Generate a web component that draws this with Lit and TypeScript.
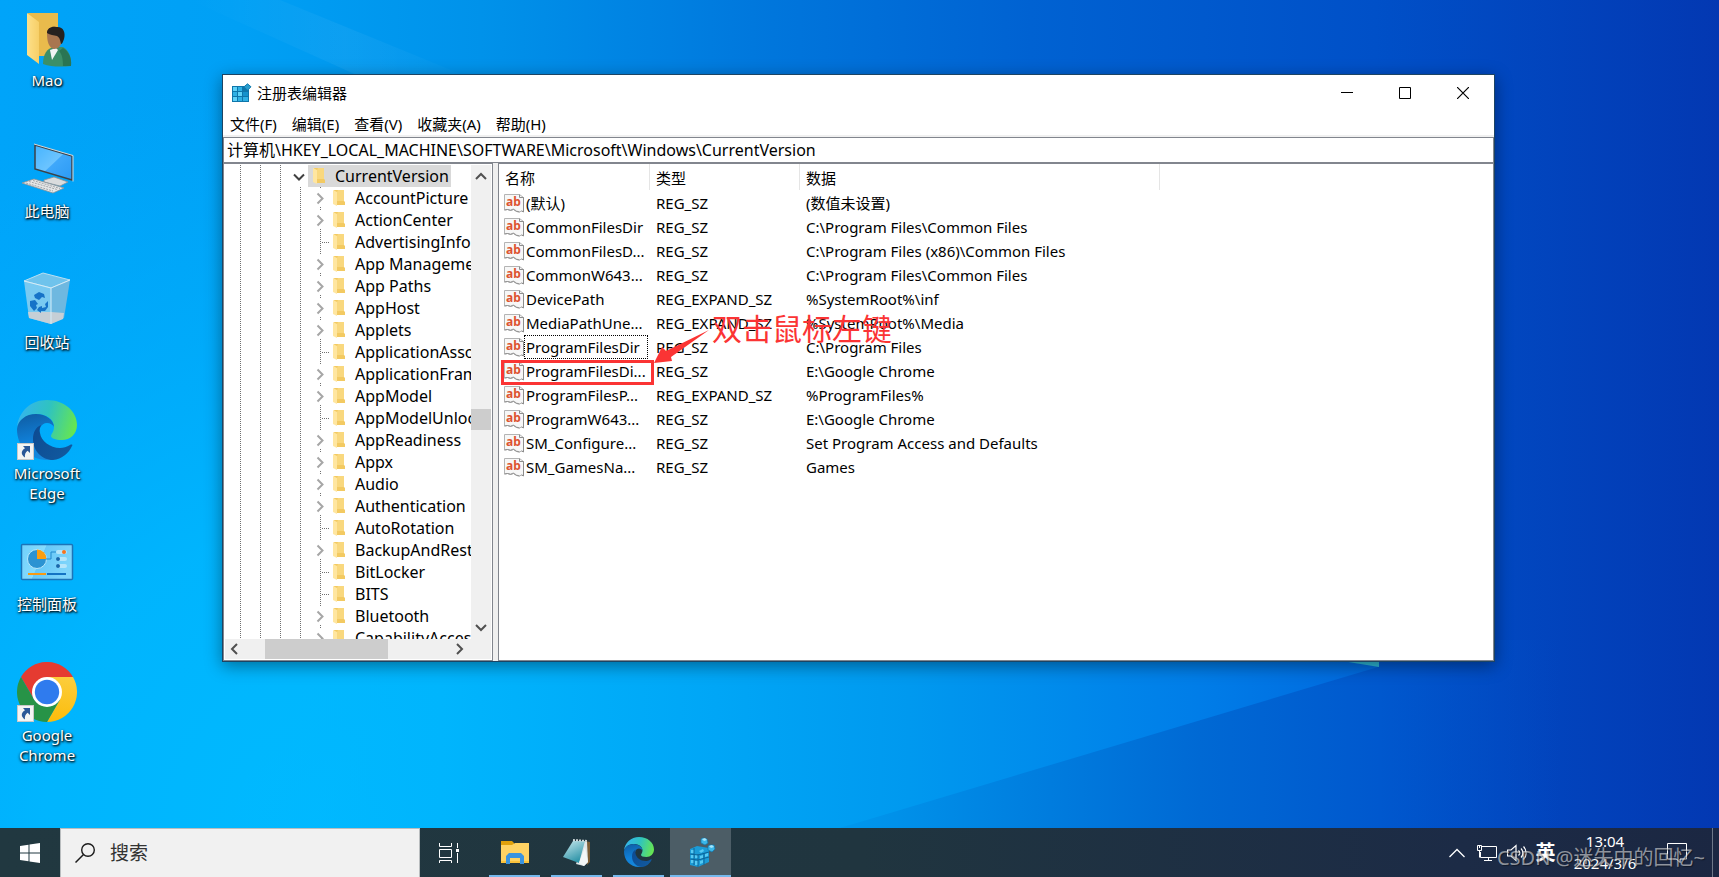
import { LitElement, html, css, svg } from "lit";
import { customElement } from "lit/decorators.js";
import { classMap } from "lit/directives/class-map.js";

const edgeArt = (id: string) => svg`
  <defs>
    <linearGradient id="${id}a" x1="0" y1="0.3" x2="1" y2="0.5">
      <stop offset="0" stop-color="#35b4f0"/><stop offset="0.5" stop-color="#2fc3c0"/><stop offset="1" stop-color="#66e552"/>
    </linearGradient>
    <linearGradient id="${id}b" x1="0.2" y1="0" x2="0.4" y2="1">
      <stop offset="0" stop-color="#0f5da4"/><stop offset="0.6" stop-color="#1080d8"/><stop offset="1" stop-color="#1688dc"/>
    </linearGradient>
    <linearGradient id="${id}c" x1="0" y1="0" x2="1" y2="0.6">
      <stop offset="0" stop-color="#0d4a92"/><stop offset="1" stop-color="#11599e"/>
    </linearGradient>
  </defs>
  <path fill="url(#${id}a)" d="M0 27C2 11 14 0 30 0c17 0 30 11 30 25 0 9-7 15-15 15-7 0-11-2-11-4s3-4 3-9C37 19 29 14 20 14 10 14 3 19 0 27z"/>
  <path fill="url(#${id}b)" d="M0 29c1-9 9-15 19-15 10 0 18 6 18 13-1-2-4-4-7-4-6 0-9 7-8 14 2 12 9 20 16 22-3 1-5 1-8 1C12 60 0 46 0 29z"/>
  <path fill="url(#${id}c)" d="M24 25c-5 2-8 7-8 14 0 12 9 21 20 21 9-1 16-7 19-14 1-1 0-2-2-1-3 2-7 3-10 3-10 0-19-7-20-15-1-3 0-6 1-8z"/>`;

const shortcutBadge = svg`
  <rect x="0.5" y="43.5" width="16" height="16" fill="#f4f4f4" stroke="#c9c9c9"/>
  <path fill="#2b5797" d="M6 46h7v7l-2.400-2.200C8.500 52.500 7.500 54.500 8 57.500 4 55 3.500 51 8 48.300z"/>`;

const desktopArt: Record<string, unknown> = {
  user: svg`
    <defs><linearGradient id="uf" x1="0" x2="1"><stop offset="0" stop-color="#fde08a"/><stop offset="1" stop-color="#f7cf67"/></linearGradient></defs>
    <path fill="#e9bb4c" d="M11 6h30v43H18z"/>
    <path fill="url(#uf)" d="M10 6l12 9v42l-12-9z"/>
    <path fill="#3c8f68" d="M26 57c0-10 4-15 10-17h10c5 3 9 9 8 19-10 1-20 1-28-2z"/>
    <path fill="#2a7553" d="M42 44c3 3 4 8 4 15h8c1-9-3-15-8-18z"/>
    <path fill="#f2f4f4" d="M33 43l6-2 2 2-6 10z"/>
    <path fill="#a9764f" d="M30 26c0-5 5-7 10-6 6 1 7 8 5 14-1 5-4 8-8 8-5-1-7-7-7-16z"/>
    <path fill="#26211f" d="M30 26c0-5 5-7 9-6 7-1 10 5 8 12-1 3-2 5-3 5-1-4-1-6-4-8-3-1-7-1-10-3z"/>`,
  computer: svg`
    <defs><linearGradient id="pc" x1="0" y1="0" x2="1" y2="1"><stop offset="0" stop-color="#45b4ff"/><stop offset="0.500" stop-color="#6cc4ff"/><stop offset="0.520" stop-color="#3fa8fb"/><stop offset="1" stop-color="#2b9af5"/></linearGradient></defs>
    <path fill="#d9dcde" stroke="#8b9196" stroke-width="0.800" d="M27 42l10-3 14 5-8 4-16-4z"/>
    <path fill="url(#pc)" stroke="#3c4248" stroke-width="1.500" d="M18 7l37 11v24L18 31z"/>
    <path fill="none" stroke="#d5dade" d="M17 6l39 11.500v26"/>
    <path fill="#e6e7e8" stroke="#8f9498" stroke-width="0.800" d="M5 45l12-4 30 9-11 5z"/>
    <path fill="none" stroke="#a2a7ab" stroke-dasharray="2 1" d="M9 45l27 8M12 43.500l28 8M16 42.500l27 8"/>`,
  bin: svg`
    <path fill="#6fc3ec" stroke="#b9dff1" d="M7 12L26 4l27 7-19 8z"/>
    <path fill="#86cdef" fill-opacity="0.900" d="M7 12l27 7v36l-22-6z"/>
    <path fill="#74b8de" fill-opacity="0.950" d="M34 19l19-8-6 38-13 6z"/>
    <path fill="#c6cfd6" d="M11 43l23 0 13 1-1 6-12 5-22-6z"/>
    <path fill="none" stroke="#d5ecf7" d="M7 12l27 7 19-8M34 19v36"/>
    <path fill="#1673c8" d="M17 26l5-3 5 2 1 4-3-1-3 3-4-2zM13 32l5-1 3 4-2 1 1 3-3 3-4-5zM22 38l3-1v2l4-1-1-3 3-3 0 6-3 4-4 0v2l-4-3z"/>`,
  edge: svg`${edgeArt("de")}${shortcutBadge}`,
  panel: svg`
    <defs><linearGradient id="cp" x1="0" y1="0" x2="1" y2="0.300"><stop offset="0" stop-color="#6fd0fb"/><stop offset="0.450" stop-color="#86dbfd"/><stop offset="0.460" stop-color="#67c8f8"/><stop offset="1" stop-color="#7ed5fb"/></linearGradient></defs>
    <rect x="4.500" y="13.500" width="51" height="35" rx="1" fill="url(#cp)" stroke="#1c74b8" stroke-width="1.500"/>
    <circle cx="20" cy="28" r="9.500" fill="#2c93d2" stroke="#b9e8fb"/>
    <path fill="#fb9e10" d="M20 18.500a9.500 9.500 0 0 1 9.500 9.500H20z"/>
    <path fill="none" stroke="#2289cc" d="M29 28h5v-7h5"/>
    <rect x="39" y="19" width="11" height="4" rx="2" fill="#b5e5fa"/><circle cx="47" cy="21" r="2" fill="#f5741d"/>
    <rect x="39" y="26" width="11" height="4" rx="2" fill="#b5e5fa"/><circle cx="41" cy="28" r="2" fill="#1768ad"/>
    <rect x="39" y="33" width="11" height="4" rx="2" fill="#b5e5fa"/><circle cx="41" cy="35" r="2" fill="#1768ad"/>
    <path stroke="#f79a13" stroke-width="2" d="M11 43h18"/><path stroke="#1474c4" stroke-width="2" d="M30 43h19"/>`,
  chrome: svg`
    <defs><linearGradient id="cy" x1="0.500" y1="0" x2="0.400" y2="1"><stop offset="0" stop-color="#fccd3b"/><stop offset="1" stop-color="#fbbc0c"/></linearGradient></defs>
    <path fill="#e53b31" d="M4 15a30 30 0 0 1 52 0H30L17 37.500z"/>
    <path fill="url(#cy)" d="M56 15a30 30 0 0 1-26 45l13-22.500L30 15z"/>
    <path fill="#279347" d="M30 60A30 30 0 0 1 4 15l13 22.500h26z"/>
    <circle cx="30" cy="30" r="15" fill="#fff"/><circle cx="30" cy="30" r="12.200" fill="#2f7bee"/>
    ${shortcutBadge}`,
};

const shortcuts = [
  { art: "user", label: "Mao" },
  { art: "computer", label: "此电脑" },
  { art: "bin", label: "回收站" },
  { art: "edge", label: "Microsoft Edge" },
  { art: "panel", label: "控制面板" },
  { art: "chrome", label: "Google Chrome" },
];

@customElement("desktop-icons")
class DesktopIcons extends LitElement {
  static styles = css`
    :host { display: block; position: relative; width: 94px; }
    .list { display: flex; flex-direction: column; margin: 0; padding: 0; list-style: none; }
    .item { height: 131px; }
    .shortcut {
      display: flex; flex-direction: column; align-items: center; gap: 3px;
      width: 100%; padding: 7px 6px 0; border: 0; background: none; color: #fff;
      font: 15px/20px "Noto Sans", "Noto Sans CJK SC", sans-serif;
      text-shadow: 1px 1px 2px #000, 0 1px 3px rgb(0 0 0 / 80%);
    }
    .art { display: block; width: 60px; height: 60px; }
  `;
  render() {
    return html`<ul class="list">
      ${shortcuts.map((s) => html`<li class="item">
        <button class="shortcut"><svg class="art" viewBox="0 0 60 60" aria-hidden="true">${desktopArt[s.art]}</svg><span>${s.label}</span></button>
      </li>`)}
    </ul>`;
  }
}

const treeItems: [string, boolean][] = [
  ["AccountPicture", true], ["ActionCenter", true], ["AdvertisingInfo", false],
  ["App Management", true], ["App Paths", true], ["AppHost", true], ["Applets", true],
  ["ApplicationAssociationToasts", false], ["ApplicationFrame", true], ["AppModel", true],
  ["AppModelUnlock", false], ["AppReadiness", true], ["Appx", true], ["Audio", true],
  ["Authentication", true], ["AutoRotation", false], ["BackupAndRestore", true],
  ["BitLocker", false], ["BITS", false], ["Bluetooth", true], ["CapabilityAccessManager", true],
];

const folder = html`<svg class="folder" width="14" height="18" viewBox="0 0 14 18" aria-hidden="true">
  <path fill="#f3ca62" d="M1 1h10v11l1 1v3H3z"/><path fill="#ffe6a0" d="M0 1l4 2v14l-4-2z"/><path fill="#f9d87e" d="M4 3l1-2h6v11H4z"/>
</svg>`;

const arrowPaths: Record<string, string> = {
  up: "M5 12l5-5 5 5", down: "M5 8l5 5 5-5", left: "M12 5l-5 5 5 5", right: "M8 5l5 5-5 5",
};
const arrow = (dir: string) => html`<button class="arrow" aria-label=${dir}>
  <svg width="20" height="20" viewBox="0 0 20 20"><path d=${arrowPaths[dir]} fill="none" stroke="#505050" stroke-width="2"/></svg>
</button>`;

@customElement("registry-tree")
class RegistryTree extends LitElement {
  static styles = css`
    :host { display: grid; grid-template: minmax(0, 1fr) 20px / minmax(0, 1fr) 20px; padding: 1px; border: 1px solid #82868e; background: #fff; overflow: hidden; font-size: 16px; }
    .tree { margin: 0; padding: 0; list-style: none; overflow: hidden; }
    .row { display: flex; align-items: center; height: 22px; padding-left: 15px; white-space: nowrap; }
    .guide { flex: none; width: 20px; height: 22px; background: repeating-linear-gradient(#707070 0 1px, transparent 1px 2px) left / 1px 100% no-repeat; }
    .toggle { flex: none; display: block; width: 20px; height: 22px; padding: 0; border: 0; background: none; }
    .node { flex: none; width: 20px; height: 22px; margin-left: -8px; }
    .root { display: flex; align-items: center; height: 22px; margin-left: -4px; padding: 0 2px 0 5px; background: #d9d9d9; }
    .folder { flex: none; margin-right: 8px; }
    .child { display: flex; align-items: center; padding-left: 1px; }
    .bar { display: flex; background: #f0f0f0; }
    .vertical { flex-direction: column; justify-content: space-between; padding: 2px 0; }
    .horizontal { justify-content: space-between; grid-column: 1 / -1; padding-right: 22px; }
    .arrow { flex: none; width: 20px; height: 20px; padding: 0; border: 0; background: none; }
    .arrow svg { display: block; }
    .track { flex: 1; display: flex; }
    .vertical .track { flex-direction: column; }
    .space-before { flex: 225; }
    .space-after { flex: 190; }
    .thumb { background: #cdcdcd; }
    .vertical .thumb { height: 21px; }
    .horizontal .thumb { width: 123px; margin-left: 20px; }
  `;
  render() {
    return html`
      <ul class="tree">
        <li class="row">
          <span class="guide"></span><span class="guide"></span><span class="guide"></span>
          <button class="node toggle" aria-label="折叠 CurrentVersion"><svg width="20" height="22" viewBox="0 0 20 22"><path d="M2 9.500l5 5 5-5" fill="none" stroke="#404040" stroke-width="2"/></svg></button>
          <span class="root">${folder}<span class="name">CurrentVersion</span></span>
        </li>
        ${treeItems.map(([name, open]) => html`<li class="row">
          <span class="guide"></span><span class="guide"></span><span class="guide"></span><span class="guide"></span>
          ${open
            ? html`<button class="node toggle" aria-label="展开 ${name}"><svg width="20" height="22" viewBox="0 0 20 22"><path d="M5.500 6.500l5 5-5 5" fill="none" stroke="#a6a6a6" stroke-width="2"/><path d="M8 0h1v1h-1zM8 20h1v1h-1z" fill="#707070"/></svg></button>`
            : html`<svg class="node" width="20" height="22" viewBox="0 0 20 22" aria-hidden="true"><path d="M8.500 0v22M10 11.500h8" fill="none" stroke="#707070" stroke-dasharray="1 1"/></svg>`}
          <span class="child">${folder}<span class="name">${name}</span></span>
        </li>`)}
      </ul>
      <div class="bar vertical">${arrow("up")}<div class="track"><span class="space-before"></span><span class="thumb"></span><span class="space-after"></span></div>${arrow("down")}</div>
      <div class="bar horizontal">${arrow("left")}<div class="track"><span class="thumb"></span></div>${arrow("right")}</div>
    `;
  }
}

const values: [string, string, string][] = [
  ["(默认)", "REG_SZ", "(数值未设置)"],
  ["CommonFilesDir", "REG_SZ", "C:\\Program Files\\Common Files"],
  ["CommonFilesD...", "REG_SZ", "C:\\Program Files (x86)\\Common Files"],
  ["CommonW643...", "REG_SZ", "C:\\Program Files\\Common Files"],
  ["DevicePath", "REG_EXPAND_SZ", "%SystemRoot%\\inf"],
  ["MediaPathUne...", "REG_EXPAND_SZ", "%SystemRoot%\\Media"],
  ["ProgramFilesDir", "REG_SZ", "C:\\Program Files"],
  ["ProgramFilesDi...", "REG_SZ", "E:\\Google Chrome"],
  ["ProgramFilesP...", "REG_EXPAND_SZ", "%ProgramFiles%"],
  ["ProgramW643...", "REG_SZ", "E:\\Google Chrome"],
  ["SM_Configure...", "REG_SZ", "Set Program Access and Defaults"],
  ["SM_GamesNa...", "REG_SZ", "Games"],
];

@customElement("registry-values")
class RegistryValues extends LitElement {
  static styles = css`
    :host { display: block; position: relative; border: 1px solid #82868e; background: #fff; overflow: hidden; }
    .values { width: 661px; table-layout: fixed; border-collapse: collapse; }
    .c1 { width: 151px; }
    .c2 { width: 150px; }
    .head { height: 27px; box-sizing: border-box; padding: 0 0 0 6px; font-weight: 400; text-align: left; background: linear-gradient(#e5e5e5, #e5e5e5) right top / 1px 26px no-repeat; }
    .cell { height: 24px; padding: 0 0 0 6px; white-space: nowrap; line-height: 22px; }
    .name-cell { padding: 0 2px 0 5px; }
    .name-box { display: flex; align-items: center; }
    .icon { flex: none; }
    .label { flex: 1; padding: 0 0 0 1px; border: 1px dotted transparent; }
    .focused { border-color: #000; }
    .ab { font: 700 12px "Noto Sans", sans-serif; fill: #dd5330; }
    .mark { position: absolute; left: 2px; top: 196px; width: 147px; height: 19px; border: 3px solid #fb3434; }
    .pointer { position: absolute; left: 155px; top: 165px; }
    .note { position: absolute; left: 213px; top: 145px; color: #fb3434; font-size: 30px; line-height: 40px; white-space: nowrap; }
  `;
  render() {
    return html`
      <table class="values">
        <colgroup><col class="c1"><col class="c2"><col></colgroup>
        <thead><tr><th class="head" scope="col">名称</th><th class="head" scope="col">类型</th><th class="head" scope="col">数据</th></tr></thead>
        <tbody>
          ${values.map(([name, type, data]) => html`<tr>
            <td class="cell name-cell"><span class="name-box">
              <svg class="icon" width="20" height="20" viewBox="0 0 20 20" aria-hidden="true">
                <path d="M.5 1.500h15l4 3v14l-2-.5-2 1-3-1-3-2-3 1-3-.5-3 .5z" fill="#f7f7f7" stroke="#b4b4b4"/>
                <path d="M15.500 1.500v3h4v14.500l-2-1M.5 17l3-.5 3 1 3-1 3 2 3 .5" fill="none" stroke="#8d8d8d"/>
                <text class="ab" x="2" y="13">ab</text>
              </svg>
              <span class=${classMap({ label: true, focused: name === "ProgramFilesDir" })}>${name}</span>
            </span></td>
            <td class="cell">${type}</td><td class="cell">${data}</td>
          </tr>`)}
        </tbody>
      </table>
      <div class="mark"></div>
      <svg class="pointer" width="56" height="36" viewBox="0 0 56 36" aria-hidden="true"><path fill="#fb3434" d="M55 1L17 28l1 4-18 2 8-16 4 4z"/></svg>
      <div class="note">双击鼠标左键</div>
    `;
  }
}

@customElement("registry-editor")
class RegistryEditor extends LitElement {
  static styles = css`
    :host { display: flex; flex-direction: column; border: 1px solid #1d4463; background: #f0f0f0; color: #000; box-shadow: 0 4px 16px rgb(0 0 0 / 40%); font: 15px/20px "Noto Sans", "Noto Sans CJK SC", sans-serif; }
    .title-bar { display: flex; align-items: center; height: 36px; padding: 0 2px 2px 9px; background: #fff; }
    .title { flex: 1; margin: 0 0 0 5px; font-size: 15px; font-weight: 400; }
    .control { display: grid; place-items: center; width: 58px; height: 36px; padding: 0; border: 0; background: none; }
    .menu { display: flex; gap: 15px; height: 22px; padding-left: 7px; background: #fff; }
    .menu-item { padding: 0; border: 0; background: none; color: inherit; font: inherit; line-height: 22px; }
    .address { height: 26px; box-sizing: border-box; margin: 2px 0 0; padding: 0 3px 2px; border: 1px solid #82868e; background: #fff; color: #000; font: inherit; font-size: 16px; outline: none; }
    .panes { flex: 1; display: grid; grid-template-columns: 270px minmax(0, 1fr); gap: 5px; min-height: 0; }
  `;
  render() {
    return html`
      <header class="title-bar">
        <svg width="20" height="20" viewBox="0 0 20 20" aria-hidden="true">
          <path fill="#0e76ab" d="M0 3h14l3 4v12H0z"/>
          <path fill="#5fd2f7" d="M1 4h4v4H1zM6 9h4v4H6zM1 14h4v4H1z"/><path fill="#2fb0e4" d="M6 4h4v4H6zM1 9h4v4H1zM6 14h4v4H6zM11 14h5v4h-5z"/><path fill="#1592cc" d="M11 9h5v4h-5z"/>
          <path fill="#2a9dcd" stroke="#117bae" d="M15.500.8l3.500 3-3.500 3.500-3.500-3.500z"/>
        </svg>
        <h1 class="title">注册表编辑器</h1>
        <button class="control" aria-label="最小化"><svg width="12" height="12"><path d="M0 5.500h12" stroke="#000"/></svg></button>
        <button class="control" aria-label="最大化"><svg width="12" height="12"><path d="M.5.5h11v11H.5z" fill="none" stroke="#000"/></svg></button>
        <button class="control" aria-label="关闭"><svg width="12" height="12"><path d="M0 0l12 12M12 0L0 12" stroke="#000" stroke-width="1.200"/></svg></button>
      </header>
      <nav class="menu">${["文件(F)", "编辑(E)", "查看(V)", "收藏夹(A)", "帮助(H)"].map((m) => html`<button class="menu-item">${m}</button>`)}</nav>
      <input class="address" aria-label="地址" readonly .value=${"计算机\\HKEY_LOCAL_MACHINE\\SOFTWARE\\Microsoft\\Windows\\CurrentVersion"}>
      <div class="panes"><registry-tree></registry-tree><registry-values></registry-values></div>
    `;
  }
}

const explorerArt = svg`
  <path fill="#e0a10c" d="M1 4h11l2 2v4H1z"/><path fill="#ffd363" d="M1 8h11l3-2h14v20H1z"/>
  <path fill="#fbc23b" d="M1 24h28v2H1z"/><path fill="#3a94e0" d="M6 27v-8l3-3h12l3 3v8h-4v-6H10v6z"/>`;
const notepadArt = svg`
  <defs><linearGradient id="np" x1="0" y1="0" x2="0.500" y2="1"><stop offset="0" stop-color="#c8e9ee"/><stop offset="1" stop-color="#2e94a8"/></linearGradient></defs>
  <path fill="#7a5c35" d="M23 4l5 1v20l-3 3z"/><path fill="#dfe6e8" d="M22 4l3 1 1 20-4 4-8-2z"/>
  <path fill="url(#np)" d="M11 4h12l-6 22L1 20z"/><path fill="#f3f6f7" d="M17 26l6-16 3 15-4 4z"/><path stroke="#cfd8da" stroke-width="2" stroke-dasharray="2 1" d="M11 3l14 1"/>`;
const regeditArt = svg`
  <path fill="#1b9bd6" d="M4 12l7-3 12 2v14l-11 5-8-2z"/>
  <path fill="#56c9f2" d="M5 13h3v3H5zM5 18h3v3H5zM5 23h3v3H5zM9 18h3v3H9zM9 24h3v4H9zM13 14l4-2 1 2-3 2zM14 19l3-1v3l-3 1zM19 17l3-1v3l-3 1zM14 24l3-1v3l-3 1z"/>
  <path stroke="#0c6498" fill="none" d="M4 17l8 1 11-3M4 22l8 1 11-3M8 11v17M12 17v13M18 16v12"/>
  <path fill="#3bb6e8" stroke="#0f77ad" stroke-width="0.700" d="M17 1l4 1 1 4-3 2-4-2v-4zM24 8l4 0 1 4-3 3-4-2v-4z"/><path fill="#a5e4fa" d="M16 2l3-1 2 2-3 1zM23 9l3-1 2 2-3 1z"/>`;

@customElement("task-bar")
class TaskBar extends LitElement {
  static styles = css`
    :host { display: flex; height: 49px; color: #fff; background: linear-gradient(90deg, #213840, #20353f 50%, #1c2b46 85%, #1b2742); font: 15px/20px "Noto Sans", "Noto Sans CJK SC", sans-serif; }
    .button { display: grid; place-items: center; padding: 0; border: 0; background: none; color: inherit; font: inherit; }
    .start { width: 60px; }
    .search { display: flex; align-items: center; gap: 15px; width: 360px; box-sizing: border-box; padding-left: 14px; border: 1px solid #b9bdbf; border-bottom: 0; background: #f1f1f1; }
    .query { flex: 1; min-width: 0; padding: 0; border: 0; outline: 0; background: none; font: 19px/28px "Noto Sans", "Noto Sans CJK SC", sans-serif; }
    .query::placeholder { color: #333; opacity: 1; }
    .view { width: 58px; }
    .apps { display: flex; gap: 11px; padding-left: 11px; }
    .app { width: 51px; border-bottom: 2px solid #76b9ed; }
    .active { width: 61px; margin-left: -5px; background: #4c5d66; }
    .tray { display: flex; margin-left: auto; position: relative; }
    .small { width: 30px; }
    .lang { width: 27px; margin-right: 9px; font-size: 20px; font-weight: 700; }
    .clock { display: flex; flex-direction: column; justify-content: center; width: 74px; padding-bottom: 2px; line-height: 22px; font-size: 15px; text-align: center; }
    .notice { width: 70px; }
    .peek { width: 7px; box-sizing: border-box; border: 0; border-left: 1px solid #6d7788; background: none; padding: 0; }
    .watermark { position: absolute; right: 14px; top: 16px; color: rgb(225 225 225 / 60%); font-size: 20px; line-height: 28px; white-space: nowrap; text-shadow: 1px 1px 1px rgb(0 0 0 / 40%); pointer-events: none; }
  `;
  render() {
    return html`
      <button class="button start" aria-label="开始"><svg width="20" height="20" viewBox="0 0 20 20" fill="#fff"><path d="M0 3l8.500-1.200v7.700H0zM9.500 1.600L20 0v9.500H9.500zM0 10.500h8.500v7.700L0 17zM9.500 10.500H20V20L9.500 18.400z"/></svg></button>
      <label class="search">
        <svg width="20" height="20" viewBox="0 0 20 20" aria-hidden="true"><circle cx="13" cy="7" r="6.300" fill="none" stroke="#1b1b1b" stroke-width="1.400"/><path d="M8.500 11.500L0.500 19.500" stroke="#1b1b1b" stroke-width="1.500"/></svg>
        <input class="query" aria-label="搜索" placeholder="搜索">
      </label>
      <button class="button view" aria-label="任务视图"><svg width="20" height="20" viewBox="0 0 20 20" fill="none" stroke="#fff"><path d="M.5 0v3.500h12V0M.5 6.500h12v8H.5zM.5 20v-2.500h12V20M18.500 0v5M18.500 10v10"/><path d="M17 6h3v3h-3z" fill="#fff" stroke="none"/></svg></button>
      <nav class="apps">
        <button class="button app" aria-label="文件资源管理器"><svg width="30" height="30" viewBox="0 0 30 30">${explorerArt}</svg></button>
        <button class="button app" aria-label="记事本"><svg width="30" height="30" viewBox="0 0 30 30">${notepadArt}</svg></button>
        <button class="button app" aria-label="Microsoft Edge"><svg width="30" height="30" viewBox="0 0 60 60">${edgeArt("te")}</svg></button>
        <button class="button app active" aria-label="注册表编辑器"><svg width="30" height="30" viewBox="0 0 30 30">${regeditArt}</svg></button>
      </nav>
      <div class="tray">
        <button class="button small" aria-label="显示隐藏的图标"><svg width="16" height="10" viewBox="0 0 16 10"><path d="M.5 9L8 1.500 15.500 9" fill="none" stroke="#fff" stroke-width="1.300"/></svg></button>
        <button class="button small" aria-label="网络"><svg width="20" height="18" viewBox="0 0 20 18" fill="none" stroke="#fff"><path d="M5 2.500h14.500v11H3.500V8M11.500 14v3M7 16.500h8M.5 1.500h4v5h-4zM2.500 4v-2M2.500 7v6.500"/></svg></button>
        <button class="button small" aria-label="音量"><svg width="20" height="18" viewBox="0 0 20 18" fill="none" stroke="#fff" stroke-width="1.200"><path d="M.5 6h3.500L9 1.500v15L4 12H.5zM11.500 6.500c1.500 1.500 1.500 3.500 0 5M14 4.500c2.500 2.500 2.500 6.500 0 9M16.500 2.500c3.500 3.500 3.500 9.500 0 13"/></svg></button>
        <button class="button lang" aria-label="输入法">英</button>
        <button class="button clock"><span>13:04</span><span>2024/3/6</span></button>
        <button class="button notice" aria-label="通知"><svg width="20" height="20" viewBox="0 0 20 20" fill="none" stroke="#fff"><path d="M.5.5h19v15.500h-6.500v3.500l-3.500-3.500H.5z"/></svg></button>
        <button class="peek" aria-label="显示桌面"></button>
        <span class="watermark">CSDN @迷失中的回忆~</span>
      </div>
    `;
  }
}

const wallpaper = html`<svg class="wallpaper" viewBox="0 0 1719 828" preserveAspectRatio="none" aria-hidden="true">
  <defs>
    <linearGradient id="base" x1="0" y1="0" x2="1" y2="0">
      <stop offset="0" stop-color="#00a4f9"/><stop offset="0.140" stop-color="#00a0f5"/><stop offset="0.280" stop-color="#0092ea"/><stop offset="0.450" stop-color="#0076dc"/>
      <stop offset="0.600" stop-color="#0062d2"/><stop offset="0.800" stop-color="#0050c8"/><stop offset="1" stop-color="#0338b2"/>
    </linearGradient>
    <radialGradient id="glow" gradientUnits="userSpaceOnUse" cx="0" cy="0" r="1" gradientTransform="translate(330 828) scale(720 760)">
      <stop offset="0" stop-color="#00baff"/><stop offset="0.400" stop-color="#00b8ff" stop-opacity="0.850"/><stop offset="1" stop-color="#00b0ff" stop-opacity="0"/>
    </radialGradient>
    <linearGradient id="beam" gradientUnits="userSpaceOnUse" x1="0" y1="0" x2="1378" y2="0">
      <stop offset="0.160" stop-color="#00b8ff" stop-opacity="0"/><stop offset="0.320" stop-color="#00b5fd"/><stop offset="0.520" stop-color="#00a6f6"/>
      <stop offset="0.660" stop-color="#0099ef"/><stop offset="0.870" stop-color="#007de8"/><stop offset="1" stop-color="#0068dd"/>
    </linearGradient>
    <linearGradient id="below" gradientUnits="userSpaceOnUse" x1="840" y1="0" x2="1560" y2="0">
      <stop offset="0" stop-color="#0098ed"/><stop offset="0.250" stop-color="#0080e0"/><stop offset="0.500" stop-color="#0069d4"/><stop offset="0.750" stop-color="#0058ce"/><stop offset="1" stop-color="#004dc6" stop-opacity="0"/>
    </linearGradient>
    <linearGradient id="ray" x1="0" y1="0" x2="1" y2="0"><stop offset="0" stop-color="#fff" stop-opacity="0"/><stop offset="0.500" stop-color="#fff" stop-opacity="0.050"/><stop offset="1" stop-color="#fff" stop-opacity="0"/></linearGradient>
  </defs>
  <path fill="url(#base)" d="M0 0h1719v828H0z"/>
  <path fill="url(#glow)" d="M0 0h1100v828H0z"/>
  <path fill="url(#below)" d="M1378 640L840 828h720V640z"/>
  <path fill="url(#beam)" d="M1378 667L840 828H0V640h1378z"/>
  <path fill="url(#ray)" d="M190 0h90l220 90h-110z"/>
  <path fill="#2db7d6" d="M1336 660l43 7v-7z"/>
</svg>`;

@customElement("app-root")
class AppRoot extends LitElement {
  static styles = css`
    :host { display: flex; flex-direction: column; height: 100vh; overflow: hidden; }
    .desktop { flex: 1; position: relative; min-height: 0; background: #0078d7; }
    .wallpaper { position: absolute; inset: 0; width: 100%; height: 100%; }
    .window { position: absolute; left: 222px; right: 224px; top: 74px; bottom: 166px; }
  `;
  render() {
    return html`
      <main class="desktop">${wallpaper}<desktop-icons></desktop-icons><registry-editor class="window"></registry-editor></main>
      <task-bar></task-bar>
    `;
  }
}
